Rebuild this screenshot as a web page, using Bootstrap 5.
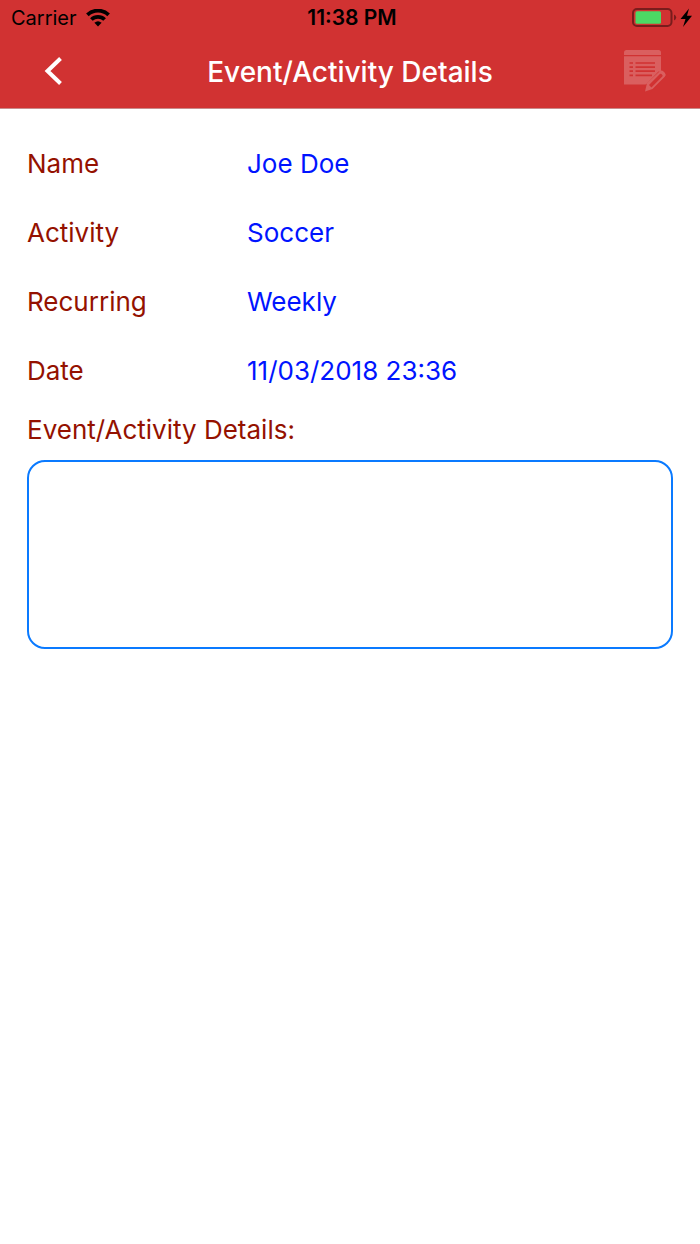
<!DOCTYPE html>
<html lang="en">
<head>
<meta charset="utf-8">
<meta name="viewport" content="width=device-width, initial-scale=1">
<title>Event/Activity Details</title>
<link href="https://cdn.jsdelivr.net/npm/bootstrap@5.3.0/dist/css/bootstrap.min.css" rel="stylesheet">
<style>
  body { font-family: Inter, "Liberation Sans", sans-serif; font-size: 26px; color: #941100; }
  .app-header { background: #d13232; border-bottom: 1px solid #c98a8a; }
  .status-bar { height: 36px; padding: 0 7px 0 11px; font-size: 20px; line-height: 36px; color: #000; }
  .status-bar time { font-size: 21px; }
  .side { flex: 1 1 0; }
  .title-bar { height: 72px; padding: 0 32px; }
  .title-bar h1 { font-size: 28px; line-height: 36px; font-weight: 500; }
  .icon-button { width: 44px; height: 44px; line-height: 0; }
  .details { padding: 20px 27px; }
  .field { height: 69px; }
  .field-name { width: 220px; }
  .field-value { color: #0014ff; }
  .notes-label { line-height: 50px; }
  .notes { height: 189px; margin-top: 5px; border: 2px solid #0a7aff; border-radius: 18px; font-size: 26px; resize: none; }
</style>
</head>
<body class="bg-white">
<header class="app-header">
  <div class="status-bar d-flex align-items-center">
    <div class="side d-flex align-items-center gap-2">
      <span>Carrier</span>
      <svg width="26" height="18" viewBox="0 0 26 18" fill="none" stroke="#000" stroke-width="3.8" aria-label="Wi-Fi">
        <path d="M2.400 5.800a15.500 15.500 0 0 1 21.200 0M6.400 10.500a9.400 9.400 0 0 1 13.200 0"/>
        <path d="M9.400 13.800a5.600 5.600 0 0 1 7.200 0L13 17.400z" fill="#000" stroke="none"/>
      </svg>
    </div>
    <time class="fw-semibold">11:38 PM</time>
    <div class="side d-flex align-items-center justify-content-end">
      <svg width="61" height="22" viewBox="0 0 61 22" aria-label="Battery charging">
        <rect x="1" y="2" width="38.500" height="17" rx="4" fill="none" stroke="#791c1c" stroke-width="2"/>
        <rect x="3.500" y="4.300" width="25.500" height="12.500" rx="1.500" fill="#4cd964"/>
        <path d="M42 7.500q2.200 1 2.200 3t-2.200 3z" fill="#791c1c"/>
        <path d="M57 1.500 48.500 12h5L51 20 60 8.800h-5z" fill="#000"/>
      </svg>
    </div>
  </div>
  <nav class="title-bar d-flex align-items-center justify-content-between" aria-label="Page">
    <button type="button" class="icon-button btn border-0 p-0" aria-label="Back">
      <svg width="44" height="44" viewBox="0 0 44 44" fill="none" stroke="#fff" stroke-width="4"><path d="M28.500 8.500 15.500 21 28.500 33.500"/></svg>
    </button>
    <h1 class="text-white m-0">Event/Activity Details</h1>
    <button type="button" class="icon-button btn border-0 p-0" aria-label="Edit">
      <svg width="44" height="44" viewBox="0 0 44 44" fill="#da5f5f">
        <path d="M0 2.500q0-2.500 2.500-2.500h32q2.500 0 2.500 2.500V5H0z"/>
        <path d="M0 6.300h37V22.500L22.500 34.500H0z"/>
        <path d="M5.500 13h3.500M11.500 13h19.500M5.500 17.200h3.500M11.500 17.200h19.500M5.500 21.200h3.500M11.500 21.200h19.500M5.500 25.400h3.500M11.500 25.400h16.500" stroke="#d13232" stroke-width="1.700"/>
        <path d="M20.500 36 34.500 21.500 44 23.500 26 43 20 43z" fill="#d13232"/>
        <path fill-rule="evenodd" d="M21 41.500 23 33 35.500 21.500q2-1.800 4 0l1.300 1.300q1.800 2 0 4L28.500 39zM25 35l2.400 2.400L38.300 26.500q.8-.8 0-1.600l-.8-.8q-.8-.8-1.600 0z"/>
      </svg>
    </button>
  </nav>
</header>
<main class="details">
  <dl class="m-0">
    <div class="field d-flex align-items-center"><dt class="field-name fw-normal">Name</dt><dd class="field-value m-0">Joe Doe</dd></div>
    <div class="field d-flex align-items-center"><dt class="field-name fw-normal">Activity</dt><dd class="field-value m-0">Soccer</dd></div>
    <div class="field d-flex align-items-center"><dt class="field-name fw-normal">Recurring</dt><dd class="field-value m-0">Weekly</dd></div>
    <div class="field d-flex align-items-center"><dt class="field-name fw-normal">Date</dt><dd class="field-value m-0">11/03/2018 23:36</dd></div>
  </dl>
  <label for="notes" class="notes-label d-block">Event/Activity Details:</label>
  <textarea id="notes" class="notes form-control bg-white"></textarea>
</main>
<script src="https://cdn.jsdelivr.net/npm/bootstrap@5.3.0/dist/js/bootstrap.bundle.min.js"></script>
</body>
</html>
